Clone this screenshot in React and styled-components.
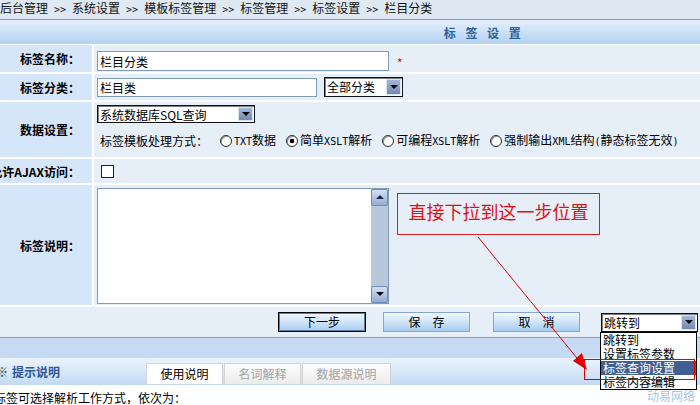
import styled, { createGlobalStyle } from 'styled-components';

const GlobalStyle = createGlobalStyle`
  html, body {
    margin: 0;
    padding: 0;
    background: #fff;
    overflow: hidden;
  }
  body {
    font-family: 'Noto Sans CJK SC', 'Liberation Sans', sans-serif;
    font-size: 12px;
    color: #000;
  }
`;

const Page = styled.div`
  position: relative;
  width: 700px;
  height: 405px;
  overflow: hidden;
`;

const Crumbs = styled.div`
  height: 19px;
  line-height: 15px;
  background: #dfe9f4;
  border-bottom: 1px solid #7d9dc3;
  white-space: nowrap;
  color: #111;
`;

const Sep = styled.span`
  font-family: 'DejaVu Sans Mono', monospace;
  font-size: 10px;
  padding: 0 6px;
`;

const TitleBar = styled.div`
  height: 24px;
  display: flex;
  align-items: center;
  justify-content: center;
  padding-left: 268px;
  background: linear-gradient(#e6f0fb, #b3d1f2);
  color: #2e5e9c;
  font-weight: bold;
  letter-spacing: 3.5px;
  white-space: pre;
`;

const Form = styled.div`
  display: grid;
  grid-template-columns: 92px 1fr;
  grid-template-rows: 27px 26px 55px 24px 120px 30px;
  gap: 2px;
  padding-top: 1px;
  background: #fff;
`;

const Label = styled.div`
  background: #d5e6fa;
  display: flex;
  align-items: center;
  justify-content: flex-end;
  padding-right: 12px;
  font-weight: bold;
  white-space: nowrap;
`;

const Cell = styled.div`
  background: #e6eef8;
  display: flex;
  flex-direction: ${(p) => (p.$column ? 'column' : 'row')};
  align-items: ${(p) => (p.$column ? 'flex-start' : 'center')};
  padding: ${(p) => p.$top || 0}px 0 0 3px;
  white-space: nowrap;
`;

const TextInput = styled.input`
  box-sizing: border-box;
  width: ${(p) => p.$w}px;
  height: ${(p) => p.$h || 20}px;
  margin: 0;
  border: 1px solid #7f9db9;
  padding: 0 2px;
  font: 12px 'Noto Sans CJK SC', sans-serif;
  color: #000;
  background: #fff;
`;

const Required = styled.span`
  color: #e00000;
  margin-left: 8px;
  font-size: 12px;
  margin-top: 3px;
`;

const Select = styled.div`
  box-sizing: border-box;
  width: ${(p) => p.$w}px;
  height: ${(p) => p.$h || 19}px;
  margin-left: ${(p) => p.$ml || 0}px;
  display: flex;
  flex-shrink: 0;
  border: 1px solid #111;
  box-shadow: inset 1px 1px 0 #808080;
  background: #fff;
`;

const SelectText = styled.span`
  flex: 1;
  padding-left: 2px;
  line-height: 17px;
  white-space: nowrap;
  overflow: hidden;
`;

const DropButton = styled.span`
  box-sizing: border-box;
  width: 15px;
  margin: 1px;
  border: 1px solid #d9e3f1;
  background: linear-gradient(#a3b8d8, #7289b1);
  display: flex;
  align-items: center;
  justify-content: center;
`;

const Caret = styled.span`
  width: 0;
  height: 0;
  border-left: 4px solid transparent;
  border-right: 4px solid transparent;
  ${(p) => (p.$up ? 'border-bottom: 4px solid #1d2c44;' : 'border-top: 4px solid #000;')}
`;

const RadioLine = styled.div`
  display: flex;
  align-items: center;
  margin-top: 9px;
  padding-left: 3px;
  line-height: 16px;
`;

const RadioCaption = styled.span`
  margin-right: 12px;
`;

const Option = styled.label`
  display: flex;
  align-items: center;
  gap: 2px;
  margin-right: 10px;
`;

const Radio = styled.input.attrs({ type: 'radio', name: 'mode' })`
  appearance: none;
  box-sizing: border-box;
  width: 12px;
  height: 12px;
  margin: 0;
  border-radius: 50%;
  border: 1px solid #2a2a2a;
  background: #fff;
  box-shadow: inset 1px 1px 0 #9a9a9a;
  &:checked {
    background: radial-gradient(circle, #000 0 2px, #fff 2.6px);
  }
`;

const Latin = styled.span`
  font-family: 'DejaVu Sans Mono', monospace;
  font-size: 10px;
`;

const Check = styled.input.attrs({ type: 'checkbox' })`
  appearance: none;
  box-sizing: border-box;
  width: 13px;
  height: 13px;
  margin: 0 0 0 4px;
  border: 1px solid #1f1f1f;
  background: #fff;
`;

const TextBox = styled.div`
  box-sizing: border-box;
  display: flex;
  width: 292px;
  height: 116px;
  margin-top: 1px;
  border: 1px solid #7f9db9;
  background: #fff;
`;

const TextArea = styled.textarea`
  flex: 1;
  border: 0;
  margin: 0;
  padding: 2px;
  resize: none;
  outline: none;
  overflow: hidden;
  font: 12px 'Noto Sans CJK SC', sans-serif;
  background: transparent;
`;

const ScrollTrack = styled.div`
  width: 17px;
  background: #b7c7dc;
  display: flex;
  flex-direction: column;
  justify-content: space-between;
`;

const ScrollButton = styled.div`
  box-sizing: border-box;
  height: 17px;
  border: 1px solid #6f8db8;
  border-radius: 2px;
  background: linear-gradient(#d3e0f2, #93add3);
  display: flex;
  align-items: center;
  justify-content: center;
`;

const ButtonRow = styled.div`
  grid-column: 1 / -1;
  background: #e6eef8;
  display: flex;
  align-items: center;
  padding-left: 278px;
`;

const Button = styled.button`
  box-sizing: border-box;
  width: ${(p) => p.$w || 87}px;
  height: 20px;
  margin: 0 0 0 ${(p) => p.$ml || 0}px;
  padding: 0;
  border: 1px solid ${(p) => (p.$primary ? '#000' : '#86a7c9')};
  box-shadow: ${(p) => (p.$primary ? 'inset 0 0 0 1px #5d7fa6' : 'none')};
  background: linear-gradient(#f2f8fe, #c8e0f7 60%, #a8cbef);
  font: 12px 'Noto Sans CJK SC', sans-serif;
  color: #000;
  line-height: 16px;
`;

const Band = styled.div`
  height: 20px;
  background: #c6dbf3;
  border-top: 1px solid #82a0c6;
  border-bottom: 1px solid #e9f1fb;
`;

const TipRow = styled.div`
  height: 26px;
  display: flex;
  align-items: flex-end;
  padding-bottom: 1px;
  box-sizing: border-box;
  background: linear-gradient(#eaf3fc, #c3daf3);
`;

const TipTitle = styled.div`
  flex: 0 0 150px;
  margin-left: -4px;
  align-self: center;
  color: #2b5797;
  font-weight: bold;
  white-space: nowrap;
`;

const TipMark = styled.span`
  color: #333;
  font-weight: normal;
  margin-right: 4px;
`;

const Tab = styled.div`
  box-sizing: border-box;
  width: ${(p) => p.$w}px;
  height: 21px;
  line-height: 20px;
  text-align: center;
  border: 1px solid ${(p) => (p.$active ? '#cfd6de' : '#d4d4d4')};
  border-bottom: 0;
  margin-right: 1px;
  background: ${(p) => (p.$active ? '#fff' : 'linear-gradient(#fdfdfd, #ebebeb)')};
  color: ${(p) => (p.$active ? '#000' : '#a3a3a3')};
`;

const Note = styled.div`
  margin: 5px 0 0 -6px;
  line-height: 16px;
  white-space: nowrap;
`;

const Watermark = styled.div`
  position: absolute;
  right: 5px;
  bottom: 2px;
  color: #a6c7e2;
  line-height: 14px;
`;

const Callout = styled.div`
  position: absolute;
  left: 397px;
  top: 193px;
  box-sizing: border-box;
  width: 203px;
  height: 42px;
  padding-bottom: 6px;
  border: 1px solid #d42020;
  display: flex;
  align-items: center;
  justify-content: center;
  color: #e01010;
  font-size: 18px;
  white-space: nowrap;
`;

const DropList = styled.div`
  position: absolute;
  left: 600px;
  top: 332px;
  width: 97px;
  box-sizing: border-box;
  border: 1px solid #000;
  background: #fff;
`;

const DropItem = styled.div`
  height: 14px;
  line-height: 14px;
  padding-left: 2px;
  white-space: nowrap;
  background: ${(p) => (p.$selected ? '#405f92' : 'transparent')};
  color: ${(p) => (p.$selected ? '#fff' : '#000')};
`;

const Overlay = styled.svg`
  position: absolute;
  left: 0;
  top: 0;
  pointer-events: none;
`;

const crumbs = ['后台管理', '系统设置', '模板标签管理', '标签管理', '标签设置', '栏目分类'];

function SelectBox({ w, h, ml, children }) {
  return (
    <Select $w={w} $h={h} $ml={ml}>
      <SelectText>{children}</SelectText>
      <DropButton>
        <Caret />
      </DropButton>
    </Select>
  );
}

export default function App() {
  return (
    <Page>
      <GlobalStyle />
      <Crumbs>
        {crumbs.map((c, i) => (
          <span key={c}>
            {i > 0 && <Sep>&gt;&gt;</Sep>}
            {c}
          </span>
        ))}
      </Crumbs>
      <TitleBar>标 签 设 置</TitleBar>

      <Form>
        <Label>标签名称：</Label>
        <Cell $top={5}>
          <TextInput $w={292} defaultValue="栏目分类" />
          <Required>*</Required>
        </Cell>

        <Label>标签分类：</Label>
        <Cell>
          <TextInput $w={220} $h={19} defaultValue="栏目类" />
          <SelectBox w={79} h={20} ml={7}>全部分类</SelectBox>
        </Cell>

        <Label>数据设置：</Label>
        <Cell $column $top={3}>
          <SelectBox w={158} h={18}>系统数据库SQL查询</SelectBox>
          <RadioLine>
            <RadioCaption>标签模板处理方式：</RadioCaption>
            <Option>
              <Radio />
              <span><Latin>TXT</Latin>数据</span>
            </Option>
            <Option>
              <Radio defaultChecked />
              <span>简单<Latin>XSLT</Latin>解析</span>
            </Option>
            <Option>
              <Radio />
              <span>可编程<Latin>XSLT</Latin>解析</span>
            </Option>
            <Option>
              <Radio />
              <span>强制输出<Latin>XML</Latin>结构<Latin>(</Latin>静态标签无效<Latin>)</Latin></span>
            </Option>
          </RadioLine>
        </Cell>

        <Label>允许AJAX访问：</Label>
        <Cell>
          <Check />
        </Cell>

        <Label>标签说明：</Label>
        <Cell>
          <TextBox>
            <TextArea />
            <ScrollTrack>
              <ScrollButton>
                <Caret $up />
              </ScrollButton>
              <ScrollButton>
                <Caret />
              </ScrollButton>
            </ScrollTrack>
          </TextBox>
        </Cell>

        <ButtonRow>
          <Button $primary $w={88}>下一步</Button>
          <Button $ml={17}>保　存</Button>
          <Button $ml={23}>取　消</Button>
          <SelectBox w={97} h={19} ml={21}>跳转到</SelectBox>
        </ButtonRow>
      </Form>

      <Band />
      <TipRow>
        <TipTitle>
          <TipMark>※</TipMark>提示说明
        </TipTitle>
        <Tab $w={77} $active>使用说明</Tab>
        <Tab $w={77}>名词解释</Tab>
        <Tab $w={89}>数据源说明</Tab>
      </TipRow>
      <Note>标签可选择解析工作方式，依次为：</Note>

      <Callout>直接下拉到这一步位置</Callout>

      <DropList>
        <DropItem>跳转到</DropItem>
        <DropItem>设置标签参数</DropItem>
        <DropItem $selected>标签查询设置</DropItem>
        <DropItem>标签内容编辑</DropItem>
      </DropList>

      <Watermark>动易网络</Watermark>

      <Overlay width="700" height="405" viewBox="0 0 700 405">
        <line x1="478" y1="237" x2="581" y2="363" stroke="#e00000" strokeWidth="1" />
        <polygon points="587,370 573,361 582,353" fill="#e00000" />
        <rect x="584.5" y="359.5" width="110" height="20" fill="none" stroke="#e00000" strokeWidth="1" />
      </Overlay>
    </Page>
  );
}
